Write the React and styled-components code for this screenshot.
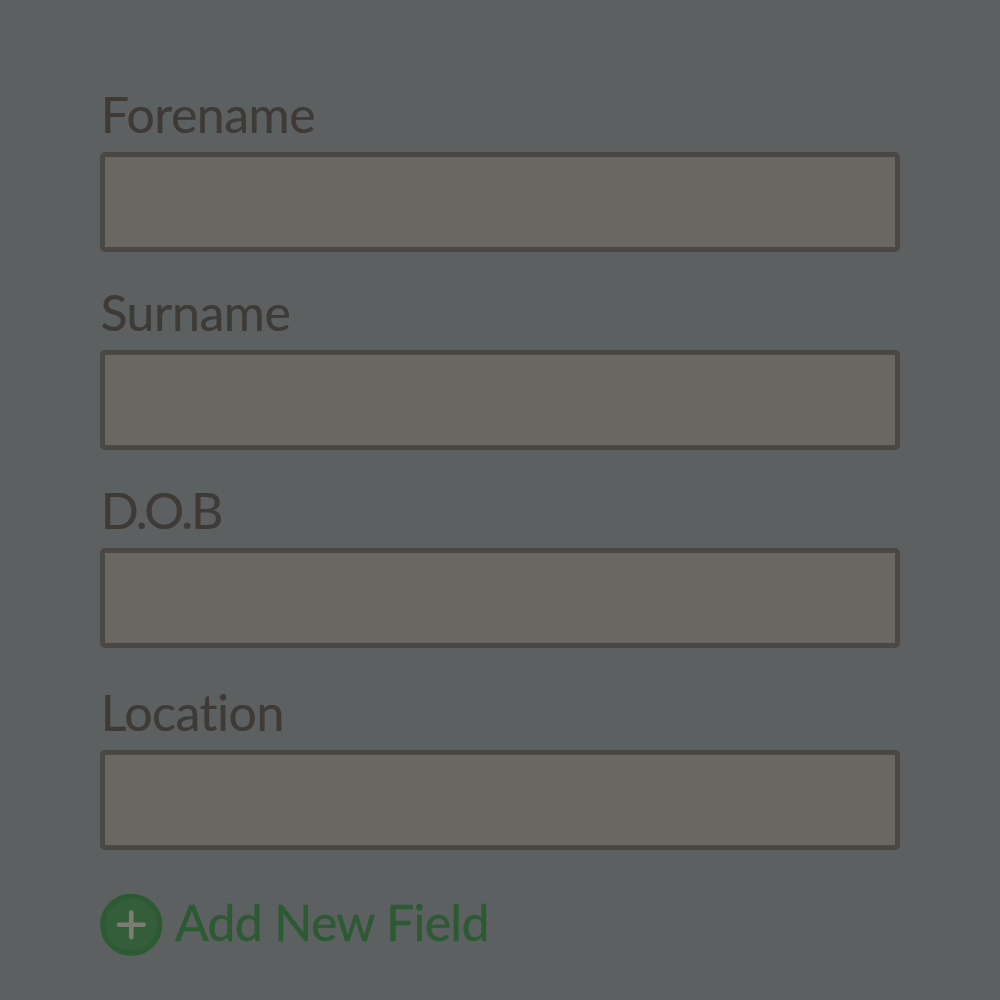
import React from "react";
import styled, { createGlobalStyle } from "styled-components";

const GlobalStyle = createGlobalStyle`
  *, *::before, *::after { box-sizing: border-box; }
  body { margin: 0; background: #5c6060; }
`;

const Form = styled.form`
  display: flex;
  flex-direction: column;
  width: 1000px;
  height: 1000px;
  padding: 84px 100px 0;
  overflow: hidden;
  background: #5c6060;
  font-family: Lato, sans-serif;
`;

const Field = styled.div`
  display: flex;
  flex-direction: column;
  flex: none;
  height: 168px;
  margin-bottom: ${({ $gap }) => $gap}px;
`;

const Label = styled.label`
  height: 68px;
  padding-left: ${({ $inset }) => $inset}px;
  font-size: 50px;
  line-height: 60px;
  letter-spacing: ${({ $tracking }) => $tracking}px;
  font-variant-ligatures: none;
  -webkit-text-stroke: 0.15px currentColor;
  color: #3e3a35;
  white-space: nowrap;
`;

const Input = styled.input`
  display: block;
  width: 800px;
  height: 100px;
  margin: 0;
  padding: 0 20px;
  border: 5px solid #4a4744;
  border-radius: 5px;
  background: #696762;
  color: #3e3a35;
  font: 40px Lato, sans-serif;
  outline: none;
`;

const AddButton = styled.button`
  display: flex;
  align-items: flex-start;
  gap: 12px;
  width: max-content;
  height: 63px;
  padding: 0;
  border: 0;
  background: none;
  color: #2b5a33;
  cursor: pointer;
`;

const AddLabel = styled.span`
  font: 50px/58px Lato, sans-serif;
  letter-spacing: -0.72px;
  font-variant-ligatures: none;
  -webkit-text-stroke: 0.3px currentColor;
  white-space: nowrap;
`;

const fields = [
  { id: "forename", label: "Forename", gap: 30, tracking: -0.5, inset: 0.8 },
  { id: "surname", label: "Surname", gap: 30, tracking: -0.4, inset: 0.4 },
  { id: "dob", label: "D.O.B", gap: 34, tracking: -2, inset: 0.8 },
  { id: "location", label: "Location", gap: 43, tracking: -0.45, inset: 0.8 },
];

const PlusIcon = () => (
  <svg width="63" height="63" viewBox="0 0 63 63" aria-hidden="true">
    <circle cx="31.3" cy="31.8" r="28.6" fill="#345d3a" stroke="#2b5a33" strokeWidth="5" />
    <path d="M31.3 19.5V44.2M19 31.8H43.6" stroke="#7b7d72" strokeWidth="4.6" strokeLinecap="round" />
  </svg>
);

export default function App() {
  return (
    <>
      <GlobalStyle />
      <Form>
        {fields.map(({ id, label, gap, tracking, inset }) => (
          <Field key={id} $gap={gap}>
            <Label htmlFor={id} $tracking={tracking} $inset={inset}>{label}</Label>
            <Input id={id} />
          </Field>
        ))}
        <AddButton type="button">
          <PlusIcon />
          <AddLabel>Add New Field</AddLabel>
        </AddButton>
      </Form>
    </>
  );
}
